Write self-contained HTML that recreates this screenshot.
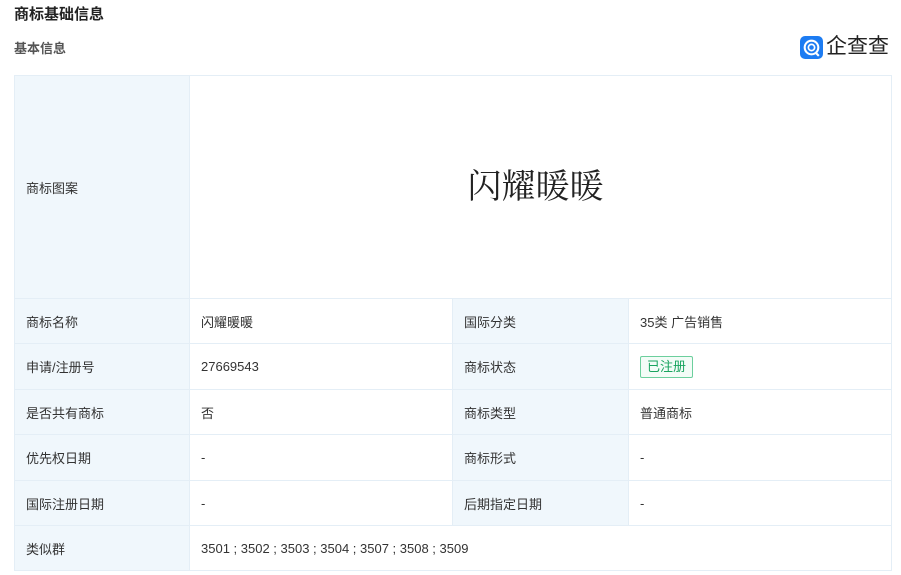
<!DOCTYPE html>
<html><head><meta charset="utf-8"><style>
body{margin:0;background:#fff;font-family:"Liberation Sans","Noto Sans CJK SC",sans-serif;color:#333;width:901px;height:575px;overflow:hidden;position:relative}
.t1{position:absolute;left:14px;top:3px;font-size:15px;font-weight:bold;color:#222}
.t2{position:absolute;left:14px;top:38px;font-size:13px;font-weight:bold;color:#555}
.logo{position:absolute;left:800px;top:35px;display:flex;align-items:center}
.logo .ic{width:23px;height:23px;border-radius:5px;background:#1d7cf2;position:relative}
.logo span{font-size:21px;color:#222;margin-left:3px;line-height:24px}
table{position:absolute;left:14px;top:75px;border-collapse:collapse;font-size:13px}
td{border:1px solid #e4eef6;padding:0 0 0 11px;height:44px;color:#333}
tr.b td{height:45px}
td.l{background:#f0f7fc}
.tag{display:inline-block;border:1px solid #6ccf9d;color:#19a45f;background:#f3fcf7;padding:1px 6px;border-radius:2px;font-size:13px;line-height:18px}
</style></head><body>
<div class="t1">商标基础信息</div>
<div class="t2">基本信息</div>
<div class="logo"><div class="ic"><svg width="23" height="23" viewBox="0 0 22 22"><circle cx="11" cy="11" r="6.5" fill="none" stroke="#fff" stroke-width="2"/><circle cx="11" cy="11" r="3" fill="none" stroke="#fff" stroke-width="1.6"/><path d="M15 16l3 3" stroke="#fff" stroke-width="2"/></svg></div><span>企查查</span></div>
<table>
<colgroup><col style="width:175px"><col style="width:263px"><col style="width:176px"><col style="width:263px"></colgroup>
<tr><td class="l" style="height:222px">商标图案</td><td colspan="3" style="text-align:center;padding:0 10px 8px 0;font-family:'Liberation Serif','Noto Serif CJK SC',serif;font-size:34px;color:#222">闪耀暖暖</td></tr>
<tr><td class="l">商标名称</td><td>闪耀暖暖</td><td class="l">国际分类</td><td>35类 广告销售</td></tr>
<tr class="b"><td class="l">申请/注册号</td><td>27669543</td><td class="l">商标状态</td><td><span class="tag">已注册</span></td></tr>
<tr><td class="l">是否共有商标</td><td>否</td><td class="l">商标类型</td><td>普通商标</td></tr>
<tr class="b"><td class="l">优先权日期</td><td>-</td><td class="l">商标形式</td><td>-</td></tr>
<tr><td class="l">国际注册日期</td><td>-</td><td class="l">后期指定日期</td><td>-</td></tr>
<tr><td class="l">类似群</td><td colspan="3">3501 ; 3502 ; 3503 ; 3504 ; 3507 ; 3508 ; 3509</td></tr>
</table>
</body></html>
